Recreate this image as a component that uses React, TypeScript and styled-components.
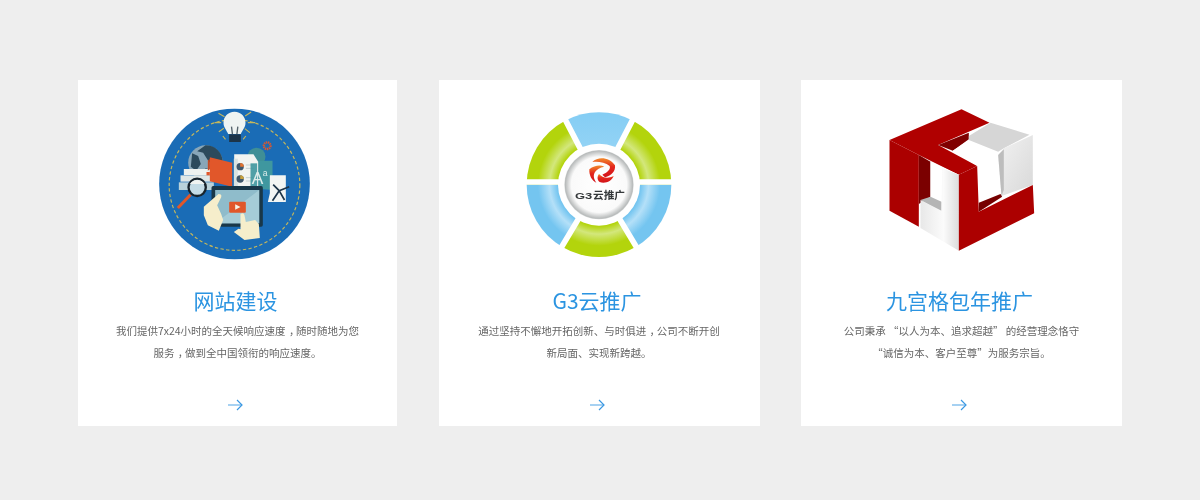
import React from "react";
import styled, { createGlobalStyle } from "styled-components";

const Global = createGlobalStyle`
  html, body { margin: 0; padding: 0; background: #eeeeee; }
  body { font-family: "Noto Sans CJK SC", "Liberation Sans", sans-serif; }
`;

const Page = styled.main`
  width: 1200px;
  height: 500px;
  box-sizing: border-box;
  padding: 80px 78px 74px;
  display: grid;
  grid-template-columns: 319px 321px 321px;
  column-gap: 41.5px;
  overflow: hidden;
`;

const Card = styled.article`
  background: #ffffff;
  padding-top: 20px;
  display: flex;
  flex-direction: column;
  align-items: center;
  height: 346px;
  box-sizing: border-box;
`;

const Picture = styled.svg`
  display: block;
  width: 170px;
  height: 170px;
  filter: blur(0.55px);
`;

const Title = styled.h3`
  margin: 15px 0 0;
  padding-right: 4px;
  font-size: 21px;
  line-height: 30px;
  font-weight: 400;
  color: #2b94e1;
  text-align: center;
  white-space: nowrap;
  filter: blur(0.3px);
`;

const Description = styled.p`
  margin: 5px 0 0;
  font-size: 10.5px;
  line-height: 21.5px;
  color: #666666;
  text-align: center;
  white-space: nowrap;
  filter: blur(0.42px);
`;

const CenteredComma = styled.span`
  padding-left: 0.32em;
  letter-spacing: -0.32em;
`;

const ArrowLink = styled.a`
  display: block;
  margin-top: 36px;
  padding-right: 4px;
  line-height: 0;
  color: #3a98e2;
  filter: blur(0.25px);
`;

const Arrow = () => (
  <svg width="15" height="12" viewBox="0 0 15 12" fill="none">
    <path d="M0 6H14" stroke="currentColor" strokeWidth="1.2" opacity=".75" />
    <path d="M9 1l5 5-5 5" stroke="currentColor" strokeWidth="1.2" />
  </svg>
);

const Website = () => (
  <Picture viewBox="7.5 0 510 510">
    <circle cx="252" cy="252" r="226" fill="#1a6cb6" />
    <circle cx="252" cy="255" r="196" fill="none" stroke="#c4b75c" strokeWidth="3.5" strokeDasharray="10 7" />
    <g stroke="#c4b75c" strokeWidth="3.5">
      <path d="M192 68h20M292 68h22M204 40l18 10M302 36l-18 12M205 95l15-10M298 98l-15-12M225 118l-8-10M278 118l8-10" />
    </g>
    <path d="M252 35c-20 0-33 15-33 33 0 14 9 21 14 34h38c5-13 14-20 14-34 0-18-13-33-33-33z" fill="#eef4f2" />
    <path d="M243 80l3 24M262 80l-3 24" stroke="#54646c" strokeWidth="4" />
    <rect x="236" y="103" width="35" height="23" fill="#1c3448" />
    <circle cx="165" cy="188" r="52" fill="#88a6b8" />
    <path d="M165 136c30 0 52 22 52 52l-25 10-18-14-16-26-18-4zM125 160l18 8 8 24-14 20-16-12zM165 205l18 4-4 14-18-4z" fill="#2c4a5c" />
    <rect x="100" y="207" width="90" height="18" fill="#eef2ef" />
    <rect x="90" y="226" width="135" height="19" fill="#dfe7e6" />
    <rect x="85" y="247" width="105" height="23" fill="#b9d2da" />
    <path d="M178 172l67 16v72l-67-16z" fill="#e1572a" />
    <path d="M178 176l-6 6v30l6-4z" fill="#c84a22" />
    <rect x="168" y="216" width="10" height="10" fill="#e1572a" />
    <circle cx="318" cy="170" r="27" fill="#3f8f96" />
    <path d="M300 182h66v88l-28-2-18 2z" fill="#3f979f" />
    <path d="M251 163h58l14 22v78h-72z" fill="#f2f4f1" />
    <path d="M250 176h12v86h-12z" fill="#d9e3e2" />
    <circle cx="269" cy="200" r="11" fill="#40586c" />
    <path d="M269 189a11 11 0 0 1 11 11h-11z" fill="#e5742f" />
    <circle cx="269" cy="237" r="11" fill="#40586c" />
    <path d="M269 226a11 11 0 0 1 11 11h-11z" fill="#c8a13c" />
    <path d="M286 195h24M286 205h24M286 233h24M286 243h24" stroke="#c4d1d2" strokeWidth="3" />
    <path d="M300 190h20v80h-20z" fill="#3f979f" opacity=".9" />
    <text x="304" y="252" fontFamily="Liberation Sans, sans-serif" fontSize="52" fill="#dcecea">A</text>
    <text x="337" y="228" fontFamily="Liberation Sans, sans-serif" fontSize="26" fill="#dcecea">a</text>
    <circle cx="350" cy="137" r="10" fill="none" stroke="#e1572a" strokeWidth="7" strokeDasharray="4 2" />
    <path d="M358 226h48v80h-54l6-26z" fill="#f2f5f3" />
    <path d="M368 254l18 18 30-12M386 272l-20 30M386 272l16 28" fill="none" stroke="#1c3448" strokeWidth="5" />
    <circle cx="140" cy="262" r="26" fill="#c4dce6" stroke="#18242c" strokeWidth="7" />
    <path d="M118 252a26 26 0 0 1 44 0z" fill="#f0f4f2" />
    <path d="M120 284l-38 40" stroke="#e1572a" strokeWidth="9" />
    <rect x="183" y="258" width="154" height="122" rx="5" fill="#193748" />
    <rect x="194" y="270" width="132" height="100" fill="#8fbccb" />
    <path d="M194 370l132-100v100z" fill="#a5ccd7" />
    <rect x="236" y="305" width="50" height="33" rx="3" fill="#e1572a" />
    <path d="M254 313l16 8-16 8z" fill="#f6f3e6" />
    <path d="M160 320L204 282Q215 282 212 292L200 316L212 342L218 360L205 392L172 376L160 346Z" fill="#f6eecb" />
    <path d="M270 342Q280 336 282 346L286 366L314 360L325 372L328 414L282 420L250 396L264 386L270 388Z" fill="#f6eecb" />
  </Picture>
);

const ringBands = (id: string, edge: string, light: string) => (
  <radialGradient id={id} gradientUnits="userSpaceOnUse" cx="252" cy="254" r="218">
    <stop offset=".5" stopColor={edge} />
    <stop offset=".57" stopColor={edge} />
    <stop offset=".68" stopColor={light} />
    <stop offset=".84" stopColor={edge} />
    <stop offset="1" stopColor={edge} />
  </radialGradient>
);

const sector = (from: number, to: number) => {
  const r = 217;
  const p = (a: number) => {
    const t = (a * Math.PI) / 180;
    return `${(252 + r * Math.cos(t)).toFixed(1)} ${(254 + r * Math.sin(t)).toFixed(1)}`;
  };
  return `M252 254L${p(from)}A${r} ${r} 0 0 1 ${p(to)}Z`;
};

const G3Ring = () => (
  <Picture viewBox="-3 0 510 510">
    <defs>
      {ringBands("ringGreen", "#b3d40c", "#d3e77c")}
      {ringBands("ringBlue", "#74c5f0", "#b4e0f8")}
      <linearGradient id="ringSky" x1="0" y1="0" x2="0" y2="1">
        <stop offset="0" stopColor="#84cdf4" />
        <stop offset="1" stopColor="#a2d9f6" />
      </linearGradient>
      <radialGradient id="hub">
        <stop offset="0" stopColor="#ffffff" />
        <stop offset=".8" stopColor="#fafafa" />
        <stop offset=".97" stopColor="#b9bcbc" />
        <stop offset="1" stopColor="#d0d3d3" />
      </radialGradient>
      <linearGradient id="flame" x1="0" y1="0" x2="0" y2="1">
        <stop offset="0" stopColor="#f28a2a" />
        <stop offset=".45" stopColor="#e3261c" />
        <stop offset="1" stopColor="#d2121a" />
      </linearGradient>
    </defs>
    <path d={sector(-180, -118)} fill="url(#ringGreen)" />
    <path d={sector(-118, -62)} fill="url(#ringSky)" />
    <path d={sector(-62, 0)} fill="url(#ringGreen)" />
    <path d={sector(0, 60)} fill="url(#ringBlue)" />
    <path d={sector(60, 120)} fill="url(#ringGreen)" />
    <path d={sector(120, 180)} fill="url(#ringBlue)" />
    <path d="M252 254L146 50M252 254L358 50M252 254L138 444M252 254L366 444M20 246H490" stroke="#fff" strokeWidth="17" fill="none" />
    <circle cx="252" cy="254" r="123" fill="#ffffff" />
    <circle cx="252" cy="254" r="104" fill="url(#hub)" />
    <path d="M232 186C250 168 284 172 300 196C302 214 290 226 270 232L262 224C276 218 288 208 284 198C270 186 248 184 232 186Z" fill="url(#flame)" />
    <path d="M223 208C238 196 256 194 268 200C254 202 246 208 240 216C234 226 236 236 244 248C230 242 222 226 223 208Z" fill="url(#flame)" />
    <path d="M252 222C262 232 276 238 296 228C290 244 270 252 254 246C246 240 246 230 252 222Z" fill="url(#flame)" />
    <text x="180" y="297" fontFamily="Liberation Sans, sans-serif" fontWeight="700" fontSize="27" textLength="52" lengthAdjust="spacingAndGlyphs" fill="#34383a">G3</text>
    <text x="234" y="298" fontFamily="Noto Sans CJK SC, sans-serif" fontWeight="700" fontSize="32" fill="#34383a">云推广</text>
  </Picture>
);

const Cube = () => (
  <Picture viewBox="4.5 0 510 510">
    <defs>
      <linearGradient id="whiteFace" x1="0" y1="0" x2="1" y2="0">
        <stop offset="0" stopColor="#e8e8e8" />
        <stop offset=".6" stopColor="#fbfbfb" />
        <stop offset="1" stopColor="#dcdcdc" />
      </linearGradient>
      <linearGradient id="cubeFace" x1="0" y1="0" x2="1" y2="1">
        <stop offset="0" stopColor="#f2f2f2" />
        <stop offset="1" stopColor="#d8d8d8" />
      </linearGradient>
    </defs>
    <path d="M42 120L130 165V380L42 332Z" fill="#ab0000" />
    <path d="M130 165L165 185V290L130 312Z" fill="#7b0000" />
    <path d="M42 120L258 28L342 68L188 135L305 198L250 224L130 165Z" fill="#b00000" />
    <path d="M188 135L280 98V118L232 152Z" fill="#800000" />
    <path d="M232 152L280 120L372 160V282L310 308V200Z" fill="#ffffff" />
    <path d="M280 108L345 68L462 104L385 145L368 155L280 120Z" fill="#d6d6d6" />
    <path d="M368 165L385 145L472 105V255L378 288Z" fill="url(#cubeFace)" />
    <path d="M368 165L385 148V270L378 288Z" fill="#bdbdbd" />
    <path d="M165 185L250 224V300L165 300Z" fill="#ffffff" />
    <path d="M135 300L165 290L198 305V336Z" fill="#b5b5b5" />
    <path d="M135 300L198 332L200 205L250 224V452L135 384Z" fill="url(#whiteFace)" />
    <path d="M250 224L305 198L310 335L472 255L476 340L250 452Z" fill="#ac0000" />
    <path d="M310 308L375 282L380 290L310 335Z" fill="#760000" />
  </Picture>
);

const services = [
  {
    id: "site",
    art: <Website />,
    title: "网站建设",
    first: <>我们提供7x24小时的全天候响应速度<CenteredComma>，</CenteredComma>随时随地为您</>,
    second: <>服务<CenteredComma>，</CenteredComma>做到全中国领衔的响应速度。</>,
  },
  {
    id: "g3",
    art: <G3Ring />,
    title: "G3云推广",
    first: <>通过坚持不懈地开拓创新、与时俱进<CenteredComma>，</CenteredComma>公司不断开创</>,
    second: <>新局面、实现新跨越。</>,
  },
  {
    id: "grid",
    art: <Cube />,
    title: "九宫格包年推广",
    first: <>公司秉承 “以人为本、追求超越” 的经营理念恪守</>,
    second: <>“诚信为本、客户至尊”为服务宗旨。</>,
  },
];

export default function App() {
  return (
    <Page>
      <Global />
      {services.map((s) => (
        <Card key={s.id}>
          {s.art}
          <Title>{s.title}</Title>
          <Description>
            {s.first}
            <br />
            {s.second}
          </Description>
          <ArrowLink href="#" aria-label="more">
            <Arrow />
          </ArrowLink>
        </Card>
      ))}
    </Page>
  );
}
